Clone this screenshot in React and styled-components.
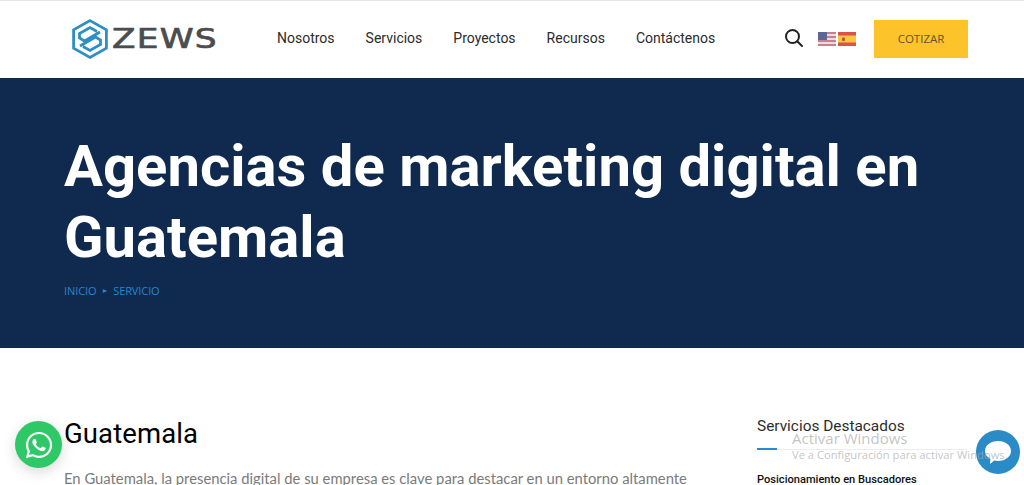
import styled, { createGlobalStyle } from 'styled-components';
import { FaWhatsapp } from 'react-icons/fa';

const GlobalStyle = createGlobalStyle`
  html, body {
    margin: 0;
    padding: 0;
    background: #fff;
    overflow: hidden;
    font-family: Roboto, "Liberation Sans", sans-serif;
  }
`;

const Page = styled.div`
  position: relative;
  width: 1024px;
  height: 485px;
  overflow: hidden;
`;

const Header = styled.header`
  box-sizing: border-box;
  height: 78px;
  border-top: 1px solid #e4e4e4;
  display: flex;
  align-items: center;
  padding: 0 56px 2px 72px;
  background: #fff;
`;

const Logo = styled.a`
  display: flex;
  align-items: center;
  gap: 4px;
  width: 205px;
`;

const LogoText = styled.span`
  font-family: "DejaVu Sans", sans-serif;
  font-size: 27px;
  font-weight: 400;
  letter-spacing: 1px;
  color: #4a4d50;
  line-height: 1;
  -webkit-text-stroke: 0.7px #4a4d50;
  transform: scaleX(1.27);
  transform-origin: left center;
`;

const Nav = styled.nav`
  display: flex;
  gap: 31px;
  margin-top: -1px;
`;

const NavLink = styled.a`
  font-size: 14px;
  color: #2b2b2b;
`;

const Actions = styled.div`
  margin-left: auto;
  display: flex;
  align-items: center;
`;

const Flags = styled.div`
  display: flex;
  gap: 2px;
  margin: 0 18px 0 14px;
`;

const QuoteButton = styled.button`
  width: 94px;
  height: 38px;
  border: 0;
  background: #fcc42a;
  color: #5c5430;
  font-family: "Open Sans", sans-serif;
  font-size: 11.5px;
`;

const Hero = styled.section`
  height: 270px;
  box-sizing: border-box;
  background: #10294f;
  padding: 53px 64px 0;
`;

const HeroTitle = styled.h1`
  margin: 0;
  width: 890px;
  font-size: 58px;
  line-height: 71px;
  font-weight: 700;
  color: #fff;
`;

const Crumbs = styled.div`
  display: flex;
  align-items: center;
  gap: 5px;
  margin-top: 10px;
  font-family: "Open Sans", sans-serif;
  font-size: 11px;
  letter-spacing: -0.1px;
  color: #2a85c8;
`;

const CrumbArrow = styled.span`
  font-size: 7px;
`;

const Content = styled.main`
  display: flex;
  padding: 66px 0 0 64px;
`;

const Article = styled.article`
  width: 693px;
  flex: none;
`;

const ArticleTitle = styled.h2`
  margin: 2px 0 0;
  font-size: 27.5px;
  line-height: 36px;
  font-weight: 400;
  letter-spacing: 0.1px;
  color: #000;
`;

const Paragraph = styled.p`
  margin: 14px 0 0;
  white-space: nowrap;
  font-family: Lato, sans-serif;
  font-size: 14.8px;
  line-height: 24px;
  color: #7b7b7b;
`;

const Sidebar = styled.aside`
  width: 210px;
`;

const SidebarTitle = styled.h3`
  margin: 0;
  font-size: 15.4px;
  line-height: 24px;
  font-weight: 400;
  color: #2c2c2c;
`;

const Rule = styled.div`
  position: relative;
  margin-top: 11px;
  height: 1px;
  background: #ececec;

  &::before {
    content: "";
    position: absolute;
    left: 0;
    top: -1px;
    width: 20px;
    height: 2px;
    background: #2a8bc6;
  }
`;

const SidebarItem = styled.div`
  margin-top: 22px;
  font-size: 11.1px;
  line-height: 16px;
  font-weight: 500;
  color: #111;
`;

const Watermark = styled.div`
  position: absolute;
  left: 792px;
  top: 429px;
  white-space: nowrap;
  font-family: "Open Sans", sans-serif;
  color: rgba(170, 170, 170, 0.7);
`;

const WatermarkTitle = styled.div`
  font-size: 15px;
  line-height: 18px;
`;

const WatermarkLine = styled.div`
  font-size: 11.2px;
  line-height: 16px;
`;

const Floating = styled.a`
  position: absolute;
  display: flex;
  align-items: center;
  justify-content: center;
  border-radius: 50%;
  left: ${(p) => p.$left}px;
  top: ${(p) => p.$top}px;
  width: ${(p) => p.$size}px;
  height: ${(p) => p.$size}px;
  background: ${(p) => p.$bg};
  box-shadow: ${(p) => p.$shadow || 'none'};
  color: #fff;
`;

const LogoMark = () => (
  <svg width="36" height="40" viewBox="0 0 36 40" fill="none" stroke="#2f8fc4" strokeWidth="2.8" strokeLinejoin="miter">
    <path d="M18 1.6 L34.4 10.8 V29.2 L18 38.4 L1.6 29.2 V10.8 Z" />
    <path d="M25 12.5 L18 8.5 L7.5 14.5 V19 L12.5 22 L28 13" />
    <path d="M11 27.5 L18 31.5 L28.5 25.5 V21 L23.5 18 L8 27" />
  </svg>
);

const SearchIcon = () => (
  <svg width="20" height="20" viewBox="0 1 20 20" fill="none" stroke="#222" strokeWidth="2" strokeLinecap="round">
    <circle cx="8.5" cy="8.5" r="6.5" />
    <line x1="13.5" y1="13.5" x2="18" y2="18" />
  </svg>
);

const UsFlag = () => (
  <svg width="18" height="14" viewBox="0 0 18 14">
    <rect width="18" height="14" fill="#e6dde2" />
    <rect y="0" width="18" height="2" fill="#c9808e" />
    <rect y="4" width="18" height="2" fill="#c9808e" />
    <rect y="8" width="18" height="2" fill="#c9808e" />
    <rect y="12" width="18" height="2" fill="#c9808e" />
    <rect width="9" height="8" fill="#5c6796" />
  </svg>
);

const EsFlag = () => (
  <svg width="18" height="14" viewBox="0 0 18 14">
    <rect width="18" height="14" fill="#d9534a" />
    <rect y="3.5" width="18" height="7" fill="#f5c842" />
    <rect x="4" y="5.5" width="3" height="3.5" rx="1" fill="#c0553a" />
  </svg>
);

const ChatBubble = () => (
  <svg width="28" height="26" viewBox="0 0 28 26">
    <path d="M14 2 C21.5 2 27 6.4 27 12 C27 17.6 21.5 22 14 22 C12.6 22 11.4 21.9 10.2 21.6 L6 25 L6.4 19.8 C3 18 1 15.2 1 12 C1 6.4 6.5 2 14 2 Z" fill="#fff" />
  </svg>
);

const navItems = ['Nosotros', 'Servicios', 'Proyectos', 'Recursos', 'Contáctenos'];

const App = () => {
  return (
    <Page>
      <GlobalStyle />
      <Header>
        <Logo>
          <LogoMark />
          <LogoText>ZEWS</LogoText>
        </Logo>
        <Nav>
          {navItems.map((item) => (
            <NavLink key={item}>{item}</NavLink>
          ))}
        </Nav>
        <Actions>
          <SearchIcon />
          <Flags>
            <UsFlag />
            <EsFlag />
          </Flags>
          <QuoteButton>COTIZAR</QuoteButton>
        </Actions>
      </Header>

      <Hero>
        <HeroTitle>Agencias de marketing digital en Guatemala</HeroTitle>
        <Crumbs>
          <span>INICIO</span>
          <CrumbArrow>►</CrumbArrow>
          <span>SERVICIO</span>
        </Crumbs>
      </Hero>

      <Content>
        <Article>
          <ArticleTitle>Guatemala</ArticleTitle>
          <Paragraph>
            En Guatemala, la presencia digital de su empresa es clave para destacar en un entorno altamente
          </Paragraph>
        </Article>
        <Sidebar>
          <SidebarTitle>Servicios Destacados</SidebarTitle>
          <Rule />
          <SidebarItem>Posicionamiento en Buscadores</SidebarItem>
        </Sidebar>
      </Content>

      <Floating $left={15} $top={421} $size={47} $bg="#2fc867" $shadow="0 4px 14px rgba(0,0,0,0.15)">
        <FaWhatsapp size={30} />
      </Floating>
      <Floating $left={976} $top={430} $size={44} $bg="#2a8bc6">
        <ChatBubble />
      </Floating>

      <Watermark>
        <WatermarkTitle>Activar Windows</WatermarkTitle>
        <WatermarkLine>Ve a Configuración para activar Windows.</WatermarkLine>
      </Watermark>
    </Page>
  );
};

export default App;
